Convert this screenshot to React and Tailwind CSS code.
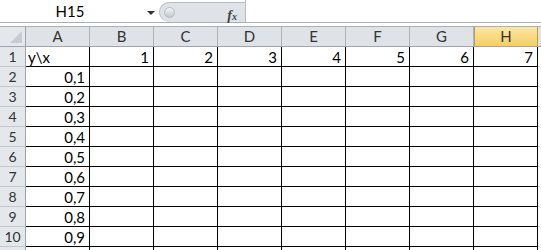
import React from "react";

const cols = ["A", "B", "C", "D", "E", "F", "G", "H"];
const row1 = ["y\\x", "1", "2", "3", "4", "5", "6", "7"];

function Cell({ children, align = "right" }) {
  return (
    <div
      className={
        "w-[64px] h-full shrink-0 border-r border-b border-black flex items-end pb-[1px] leading-none text-[15px] text-black " +
        (align === "left" ? "justify-start pl-[2px]" : "justify-end pr-[4px]")
      }
    >
      {children}
    </div>
  );
}

function DataRow({ n, label, values }) {
  return (
    <div className="flex h-[20px]">
      <div className="w-[26px] shrink-0 h-full bg-[#e4e7eb] border-r border-b border-r-[#9ea5ae] border-b-[#c3c8cf] flex items-center justify-center text-[14px] text-[#333] leading-none">
        {label}
      </div>
      {values.map((v, i) => (
        <Cell key={i} align={n === 1 && i === 0 ? "left" : "right"}>
          {v}
        </Cell>
      ))}
      <div className="flex-1 h-full bg-white border-b border-[#d4d9e0]"></div>
    </div>
  );
}

export default function App() {
  const rows = [];
  for (let r = 2; r <= 11; r++) {
    const vals = cols.map((_, i) => (i === 0 && r <= 10 ? "0," + (r - 1) : ""));
    rows.push({ n: r, label: r <= 10 ? String(r) : "", vals });
  }
  return (
    <div
      className="w-[541px] h-[250px] overflow-hidden bg-white relative"
      style={{ fontFamily: "Lato, 'Liberation Sans', sans-serif" }}
    >
      {/* formula bar */}
      <div className="flex h-[23px] border-b border-[#a9b0b8] bg-white">
        <div className="w-[159px] shrink-0 relative flex items-center">
          <span className="w-[140px] text-center text-[15px] text-black leading-none">H15</span>
          <svg className="absolute left-[147px] top-[11px]" width="8" height="5" viewBox="0 0 8 5">
            <polygon points="0,0 8,0 4,4" fill="#333" />
          </svg>
        </div>
        <div className="w-[86px] shrink-0 h-full pt-[2px]">
          <div className="h-full bg-[#dfe2e6] rounded-l-[11px] border-l border-t border-[#b9bec5] relative flex items-center">
            <div className="ml-[4px] w-[11px] h-[11px] rounded-full bg-gradient-to-b from-[#f4f5f6] to-[#c3c7cc] border border-[#b5bac1]"></div>
            <span
              className="absolute right-[8px] top-[2px] text-[14px] italic font-bold text-[#444]"
              style={{ fontFamily: "'Liberation Serif', serif" }}
            >
              f<span className="text-[10px]">x</span>
            </span>
          </div>
        </div>
        <div className="flex-1 h-full bg-white border-l border-[#b9bec5]"></div>
      </div>
      <div className="h-[3px] bg-white"></div>
      {/* column header */}
      <div className="flex h-[21px] border-t border-[#a9b0b8] border-b border-b-[#9ea5ae]">
        <div className="w-[26px] shrink-0 h-full bg-[#e4e7eb] border-r border-[#9ea5ae] relative">
          <svg className="absolute right-[3px] bottom-[3px]" width="12" height="12" viewBox="0 0 12 12">
            <polygon points="12,0 12,12 0,12" fill="#c7ccd2" />
          </svg>
        </div>
        {cols.map((c) => (
          <div
            key={c}
            className={
              "w-[64px] shrink-0 h-full flex items-center justify-center text-[15px] leading-none border-r " +
              (c === "H"
                ? "bg-gradient-to-b from-[#fbe6a3] to-[#f6cf62] border-[#c49b45] border-l border-l-[#c49b45] text-[#333]"
                : "bg-[#dfe3e8] border-[#aeb4bc] text-[#333]")
            }
          >
            {c}
          </div>
        ))}
        <div className="flex-1 h-full bg-[#dfe3e8]"></div>
      </div>
      <DataRow n={1} label="1" values={row1} />
      {rows.map((r) => (
        <DataRow key={r.n} n={r.n} label={r.label} values={r.vals} />
      ))}
    </div>
  );
}
